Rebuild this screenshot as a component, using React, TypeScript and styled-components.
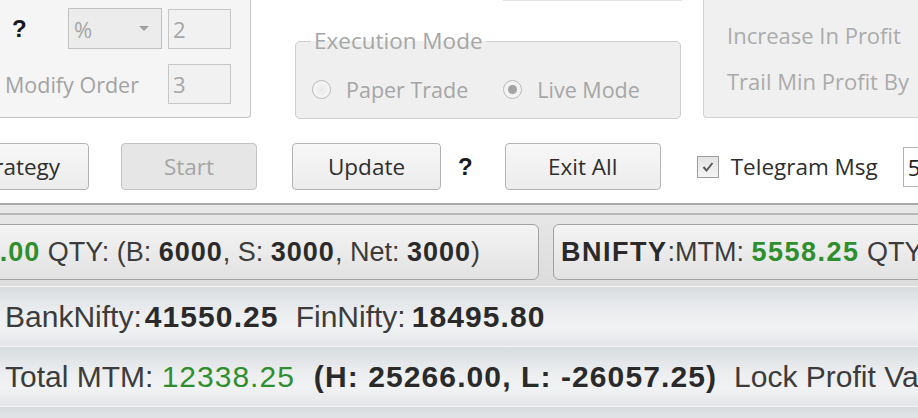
import styled, { createGlobalStyle } from 'styled-components';

const GlobalStyle = createGlobalStyle`
  html, body {
    margin: 0;
    padding: 0;
    background: #ffffff;
  }
  body {
    width: 918px;
    height: 418px;
    overflow: hidden;
    font-family: "Open Sans", "Liberation Sans", sans-serif;
  }
`;

const Screen = styled.div`
  width: 918px;
  height: 418px;
  overflow: hidden;
  background: #ffffff;
  display: flex;
  flex-direction: column;
`;

/* ---------- top settings strip ---------- */

const TopArea = styled.div`
  display: flex;
  height: 120px;
  flex-shrink: 0;
`;

const SettingsPanel = styled.div`
  width: 251px;
  height: 118px;
  box-sizing: border-box;
  flex-shrink: 0;
  background: #f5f5f5;
  border-right: 1px solid #c4c4c4;
  border-bottom: 1px solid #c4c4c4;
  border-bottom-right-radius: 4px;
  display: grid;
  grid-template-columns: 62px 94px 63px;
  grid-template-rows: 41px 40px;
  column-gap: 6px;
  row-gap: 15px;
  padding: 8px 0 0 0;
  align-items: center;
`;

const HelpMark = styled.span<{ $size?: number }>`
  font-family: "Liberation Sans", Arial, sans-serif;
  font-weight: bold;
  font-size: ${(p) => p.$size ?? 24}px;
  color: #1a1a1a;
  padding-left: 12px;
`;

const DimLabel = styled.span<{ $span?: number }>`
  grid-column: span ${(p) => p.$span ?? 1};
  font-size: 21.5px;
  color: #a3a3a3;
  padding-left: 5px;
  white-space: nowrap;
`;

const Combo = styled.div`
  height: 41px;
  box-sizing: border-box;
  border: 1px solid #c2c2c2;
  background: #ececec;
  display: flex;
  align-items: center;
  justify-content: space-between;
  padding: 0 12px 0 5px;
  font-size: 22px;
  color: #a6a6a6;
`;

const ComboArrow = styled.span`
  width: 0;
  height: 0;
  border-left: 5px solid transparent;
  border-right: 5px solid transparent;
  border-top: 5px solid #a0a0a0;
`;

const NumBox = styled.div<{ $enabled?: boolean }>`
  height: 40px;
  box-sizing: border-box;
  border: 1px solid ${(p) => (p.$enabled ? '#a9a9a9' : '#c6c6c6')};
  background: ${(p) => (p.$enabled ? '#ffffff' : '#f1f1f1')};
  display: flex;
  align-items: center;
  padding-left: 4px;
  font-size: 22px;
  color: ${(p) => (p.$enabled ? '#222' : '#a6a6a6')};
`;

const MiddleColumn = styled.div`
  width: 452px;
  flex-shrink: 0;
  display: flex;
  flex-direction: column;
`;

const FieldStub = styled.div`
  margin-left: 252px;
  width: 179px;
  height: 1px;
  background: #e2e2e2;
`;

const GroupBox = styled.fieldset`
  margin: 27px 0 0 44px;
  width: 386px;
  height: 91px;
  box-sizing: border-box;
  padding: 21px 0 0 16px;
  border: 1px solid #cfcfcf;
  border-radius: 5px;
  background: #efefef;
`;

const Legend = styled.legend`
  margin-left: -1px;
  padding: 0 3px;
  font-size: 22.5px;
  line-height: 26px;
  color: #a6a6a6;
`;

const RadioRow = styled.div`
  display: flex;
  align-items: center;
  gap: 35px;
`;

const RadioItem = styled.label`
  display: flex;
  align-items: center;
  gap: 15px;
  font-size: 21.5px;
  color: #a6a6a6;
`;

const RadioCircle = styled.span<{ $checked?: boolean }>`
  width: 19px;
  height: 19px;
  box-sizing: border-box;
  border-radius: 50%;
  border: 1px solid #b9b9b9;
  background: radial-gradient(circle, #e9e9e9 0%, #f8f8f8 80%);
  display: flex;
  align-items: center;
  justify-content: center;
  &::after {
    content: '';
    width: 9px;
    height: 9px;
    border-radius: 50%;
    background: ${(p) => (p.$checked ? '#a4a4a4' : 'transparent')};
  }
`;

const RightPanel = styled.div`
  flex: 1;
  height: 118px;
  box-sizing: border-box;
  background: #f0f0f0;
  border-left: 1px solid #d2d2d2;
  border-bottom: 1px solid #d2d2d2;
  border-bottom-left-radius: 4px;
  display: flex;
  flex-direction: column;
  gap: 18px;
  padding: 21px 0 0 23px;
`;

const PanelLabel = styled.span`
  font-size: 22px;
  line-height: 28px;
  color: #ababab;
  white-space: nowrap;
`;

/* ---------- button strip ---------- */

const ButtonRow = styled.div`
  display: flex;
  align-items: center;
  height: 47px;
  margin-top: 23px;
  flex-shrink: 0;
`;

const Button = styled.button<{ $width: number; $gap: number; $disabled?: boolean }>`
  width: ${(p) => p.$width}px;
  margin-left: ${(p) => p.$gap}px;
  height: 47px;
  flex-shrink: 0;
  box-sizing: border-box;
  border-radius: 4px;
  border: 1px solid ${(p) => (p.$disabled ? '#c3c3c3' : '#b4b4b4')};
  background: ${(p) =>
    p.$disabled ? '#e6e6e6' : 'linear-gradient(#f7f7f7, #ececec)'};
  color: ${(p) => (p.$disabled ? '#a5a5a5' : '#2e2e2e')};
  font-family: "Open Sans", "Liberation Sans", sans-serif;
  font-size: 22.5px;
  padding: 0;
  white-space: nowrap;
`;

const InlineHelp = styled(HelpMark)`
  margin-left: 5px;
  padding-left: 12px;
  width: 15px;
`;

const CheckItem = styled.label`
  margin-left: 36px;
  display: flex;
  align-items: center;
  gap: 12px;
  font-size: 22.5px;
  color: #2e2e2e;
  white-space: nowrap;
`;

const CheckBox = styled.span`
  width: 22px;
  height: 22px;
  box-sizing: border-box;
  border: 1px solid #9c9c9c;
  background: linear-gradient(#e4e4e4, #f4f4f4);
  display: flex;
  align-items: center;
  justify-content: center;
`;

const SmallInput = styled.div`
  margin-left: 25px;
  width: 40px;
  height: 40px;
  flex-shrink: 0;
  box-sizing: border-box;
  border: 1px solid #b4b4b4;
  background: #fff;
  display: flex;
  align-items: center;
  padding-left: 4px;
  font-size: 22px;
  color: #222;
`;

/* ---------- data bands ---------- */

const DataArea = styled.div`
  margin-top: 13px;
  flex: 1;
  border-top: 2px solid #a9a9a9;
  background: #e8e8e8;
  display: flex;
  flex-direction: column;
  padding-top: 8px;
  font-family: "Liberation Sans", Arial, sans-serif;
`;

const BoxBand = styled.div`
  border-top: 2px solid #b9b9b9;
  height: 73px;
  flex-shrink: 0;
  box-sizing: border-box;
  padding: 9px 0 6px;
  background: linear-gradient(#e6e6e6, #dcdcdc);
  display: flex;
  gap: 14px;
`;

const StatBox = styled.div<{ $width: number; $offset?: number; $alignEnd?: boolean }>`
  width: ${(p) => p.$width}px;
  margin-left: ${(p) => p.$offset ?? 0}px;
  flex-shrink: 0;
  height: 56px;
  box-sizing: border-box;
  border: 1px solid #a2a2a2;
  border-radius: 6px;
  background: linear-gradient(#f4f4f4, #e9e9e9 60%, #e2e2e2);
  display: flex;
  align-items: center;
  justify-content: ${(p) => (p.$alignEnd ? 'flex-end' : 'flex-start')};
  padding: 0 ${(p) => (p.$alignEnd ? 58 : 7)}px 0 7px;
  overflow: hidden;
  font-size: 27px;
  color: #3c3c3c;
`;

const InfoBand = styled.div`
  height: 60px;
  flex-shrink: 0;
  box-sizing: border-box;
  border-top: 1px solid #f4f4f4;
  background: linear-gradient(#d9dcdf, #eceef0 45%, #f1f2f3 70%, #e3e5e8);
  display: flex;
  align-items: center;
  padding-left: 5px;
  font-size: 30px;
  color: #3c3c3c;
`;

const Line = styled.span`
  flex-shrink: 0;
  white-space: pre;
`;

const Val = styled.b<{ $green?: boolean; $spacing?: number }>`
  font-weight: bold;
  letter-spacing: ${(p) => p.$spacing ?? 1.1}px;
  color: ${(p) => (p.$green ? '#2f8f2f' : '#2a2a2a')};
`;

const Plain = styled.span<{ $green?: boolean; $spacing?: number }>`
  letter-spacing: ${(p) => p.$spacing ?? 0}px;
  color: ${(p) => (p.$green ? '#2f8f2f' : '#3c3c3c')};
`;

const Spacer = styled.span<{ $w: number }>`
  display: inline-block;
  width: ${(p) => p.$w}px;
`;

export default function App() {
  return (
    <>
      <GlobalStyle />
      <Screen>
        <TopArea>
          <SettingsPanel>
            <HelpMark>?</HelpMark>
            <Combo>
              %
              <ComboArrow />
            </Combo>
            <NumBox>2</NumBox>
            <DimLabel $span={2}>Modify Order</DimLabel>
            <NumBox>3</NumBox>
          </SettingsPanel>
          <MiddleColumn>
            <FieldStub />
            <GroupBox>
              <Legend>Execution Mode</Legend>
              <RadioRow>
                <RadioItem>
                  <RadioCircle />
                  Paper Trade
                </RadioItem>
                <RadioItem>
                  <RadioCircle $checked />
                  Live Mode
                </RadioItem>
              </RadioRow>
            </GroupBox>
          </MiddleColumn>
          <RightPanel>
            <PanelLabel>Increase In Profit</PanelLabel>
            <PanelLabel>Trail Min Profit By</PanelLabel>
          </RightPanel>
        </TopArea>

        <ButtonRow>
          <Button $width={144} $gap={-55}>Strategy</Button>
          <Button $width={136} $gap={32} $disabled>Start</Button>
          <Button $width={149} $gap={35}>Update</Button>
          <InlineHelp $size={24}>?</InlineHelp>
          <Button $width={156} $gap={32}>Exit All</Button>
          <CheckItem>
            <CheckBox>
              <svg width="14" height="14" viewBox="0 0 14 14">
                <path d="M2.5 7 L5.5 10.5 L11.5 3" fill="none" stroke="#5a5a5a" strokeWidth="2" />
              </svg>
            </CheckBox>
            Telegram Msg
          </CheckItem>
          <SmallInput>5</SmallInput>
        </ButtonRow>

        <DataArea>
          <BoxBand>
            <StatBox $width={600} $offset={-61} $alignEnd>
              <Line>
                <Plain>NIFTY: MTM: </Plain>
                <Val $green $spacing={1}>6780.00</Val>
                <Plain> QTY: (B: </Plain>
                <Val $spacing={1}>6000</Val>
                <Plain>, S: </Plain>
                <Val $spacing={1}>3000</Val>
                <Plain>, Net: </Plain>
                <Val $spacing={1}>3000</Val>
                <Plain>)</Plain>
              </Line>
            </StatBox>
            <StatBox $width={600}>
              <Line>
                <Val $spacing={1.5}>BNIFTY</Val>
                <Plain>:MTM: </Plain>
                <Val $green $spacing={1.5}>5558.25</Val>
                <Plain> QTY: (B: </Plain>
                <Val $spacing={1.5}>4500</Val>
                <Plain>, S: </Plain>
                <Val $spacing={1.5}>2250</Val>
              </Line>
            </StatBox>
          </BoxBand>
          <InfoBand>
            <Line>
              <Plain>BankNifty:</Plain>
              <Spacer $w={3} />
              <Val>41550.25</Val>
              <Spacer $w={17} />
              <Plain>FinNifty:</Plain>
              <Spacer $w={6} />
              <Val>18495.80</Val>
            </Line>
          </InfoBand>
          <InfoBand>
            <Line>
              <Plain>Total MTM: </Plain>
              <Plain $green $spacing={1}>12338.25</Plain>
              <Spacer $w={19} />
              <Val>(H: 25266.00, L: -26057.25)</Val>
              <Spacer $w={17} />
              <Plain>Lock Profit Value</Plain>
            </Line>
          </InfoBand>
          <InfoBand />
        </DataArea>
      </Screen>
    </>
  );
}
